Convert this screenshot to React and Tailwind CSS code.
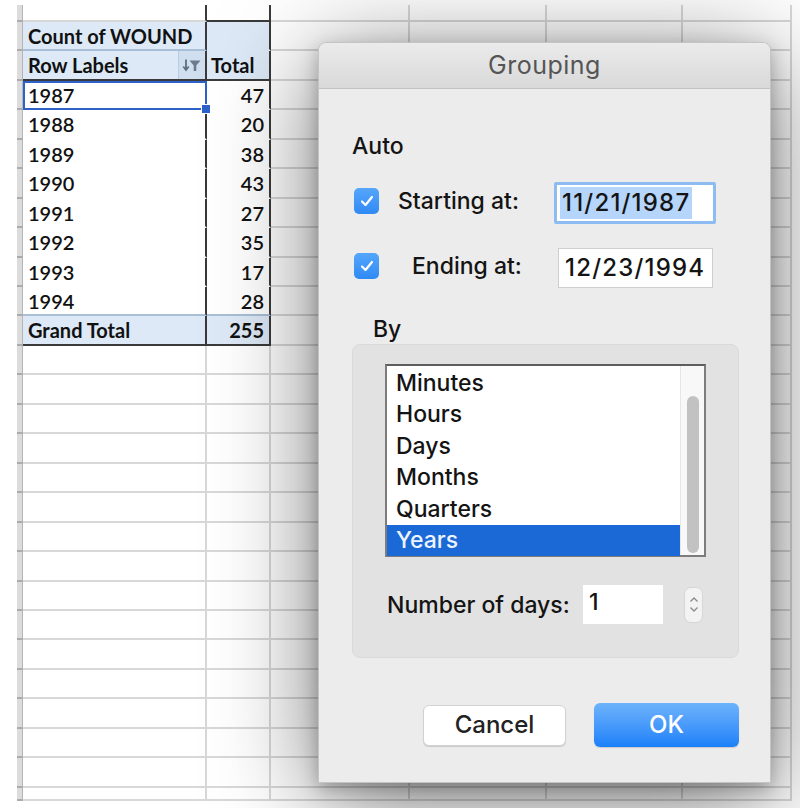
import React from "react";

const ROW_H = [
  "h-[17px]",
  "h-[29px]", "h-[30px]", "h-[29px]", "h-[30px]", "h-[29px]", "h-[30px]",
  "h-[29px]", "h-[30px]", "h-[29px]", "h-[29px]", "h-[30px]", "h-[29px]",
  "h-[30px]", "h-[29px]", "h-[30px]", "h-[29px]", "h-[30px]", "h-[29px]",
  "h-[30px]", "h-[29px]", "h-[29px]", "h-[30px]", "h-[29px]", "h-[30px]",
  "h-[29px]", "h-[30px]", "h-[13px]",
];

const COL_W = ["w-[184px]", "w-[64px]", "w-[139px]", "w-[137px]", "w-[136px]", "w-[109px]"];

const PIVOT = {
  1: { a: "Count of WOUND", b: "", type: "count" },
  2: { a: "Row Labels", b: "Total", type: "head" },
  3: { a: "1987", b: "47", type: "data" },
  4: { a: "1988", b: "20", type: "data" },
  5: { a: "1989", b: "38", type: "data" },
  6: { a: "1990", b: "43", type: "data" },
  7: { a: "1991", b: "27", type: "data" },
  8: { a: "1992", b: "35", type: "data" },
  9: { a: "1993", b: "17", type: "data" },
  10: { a: "1994", b: "28", type: "last" },
  11: { a: "Grand Total", b: "255", type: "grand" },
};

const GRID = "border-r-2 border-b-2 border-[#d8d8d8] bg-white";

function cellClass(r, c) {
  const p = PIVOT[r];
  if (r === 0 && c === 1) return "border-r-2 border-r-[#3a3a3a] border-b-2 border-b-[#3a3a3a] bg-white";
  if (r === 0 && c === 0) return "border-r-2 border-r-[#3a3a3a] border-b-2 border-b-[#d8d8d8] bg-white";
  if (!p || c > 1) return GRID;
  switch (p.type) {
    case "count":
      return c === 0
        ? "border-r-2 border-r-[#3a3a3a] border-b-2 border-b-[#a9bfd8] bg-[#dde9f6] font-bold"
        : "border-r-2 border-r-[#3a3a3a] border-b-2 border-b-[#dde9f6] bg-[#dde9f6] font-bold";
    case "head":
      return "border-r-2 border-r-[#3a3a3a] border-b-2 border-b-[#3a3a3a] bg-[#dde9f6] font-bold";
    case "data":
      return "border-r-2 border-r-[#3a3a3a] border-b-2 border-b-white bg-white font-semibold";
    case "last":
      return "border-r-2 border-r-[#3a3a3a] border-b-2 border-b-[#a9bfd8] bg-white font-semibold";
    case "grand":
      return "border-r-2 border-r-[#3a3a3a] border-b-2 border-b-[#3a3a3a] bg-[#dde9f6] font-bold";
    default:
      return GRID;
  }
}

function FilterButton() {
  return (
    <div className="ml-auto h-full w-[27px] border-l border-[#b8cde3] bg-[#cfdff0] flex items-center justify-center">
      <svg width="22" height="20" viewBox="0 0 22 20">
        <path d="M5 4.5v10" stroke="#5d6d7e" strokeWidth="1.8" />
        <path d="M2.3 11.5L5 15.2l2.7-3.7" fill="none" stroke="#5d6d7e" strokeWidth="1.6" />
        <path d="M8.5 5.5h11l-4.2 5V16h-2.6v-5.5z" fill="#6c7b8b" />
      </svg>
    </div>
  );
}

function SheetRow({ r }) {
  const p = PIVOT[r];
  return (
    <div className={`flex ${ROW_H[r]}`}>
      <div className="w-[6px] bg-[#dcdcdc] border-r border-r-[#b5b5b5] border-b-2 border-b-[#ababab]" />
      {COL_W.map((w, c) => {
        let content = null;
        if (p && c === 0) {
          content = (
            <div className="flex h-full items-center pl-[5px]">
              <span>{p.a}</span>
              {p.type === "head" && <FilterButton />}
            </div>
          );
        }
        if (p && c === 1 && p.b) {
          content = (
            <div
              className={`flex h-full items-center ${
                p.type === "head" ? "justify-start pl-[4px]" : "justify-end pr-[5px]"
              }`}
            >
              {p.b}
            </div>
          );
        }
        return (
          <div key={c} className={`${w} h-full ${cellClass(r, c)}`}>
            {content}
          </div>
        );
      })}
    </div>
  );
}

function Check() {
  return (
    <div className="w-[25px] h-[26px] rounded-[5px] bg-gradient-to-b from-[#55a6fb] to-[#2f8af4] flex items-center justify-center shrink-0">
      <svg width="20" height="20" viewBox="0 0 20 20">
        <path d="M5 10.5l3.5 3.5 6.5-8" fill="none" stroke="white" strokeWidth="2.2" strokeLinecap="round" strokeLinejoin="round" />
      </svg>
    </div>
  );
}

function Dialog() {
  const items = ["Minutes", "Hours", "Days", "Months", "Quarters", "Years"];
  return (
    <div className="absolute left-[318px] top-[42px] w-[453px] h-[741px] rounded-t-[8px] bg-[#ececec] border border-[#c4c4c4] shadow-[0_16px_100px_rgba(0,0,0,0.55),0_6px_18px_rgba(0,0,0,0.25)] flex flex-col font-['Inter','Liberation_Sans',sans-serif] font-medium text-[23px] text-[#141414]">
      <div className="h-[46px] rounded-t-[8px] bg-gradient-to-b from-[#ebebeb] to-[#d9d9d9] border-b border-[#c3c3c3] flex items-center justify-center text-[#555] text-[25px] font-normal tracking-[0.5px]">
        Grouping
      </div>
      <div className="flex flex-col pl-[33px] pr-[31px]">
        <div className="mt-[43px] h-[28px] leading-[28px]">Auto</div>

        <div className="mt-[22px] flex items-center h-[42px]">
          <div className="ml-[2px] -mt-[5px]"><Check /></div>
          <div className="ml-[19px] w-[156px] -mt-[4px] leading-[28px]">Starting at:</div>
          <div className="w-[162px] h-[42px] bg-white border-[3px] border-[#8dbcf3] rounded-[2px] flex items-center pl-[3px]">
            <span className="bg-[#b5d5fb] px-[2px] leading-[32px] tracking-[1.2px] text-[24px]">11/21/1987</span>
          </div>
        </div>

        <div className="mt-[24px] flex items-center h-[40px]">
          <div className="ml-[2px] -mt-[5px]"><Check /></div>
          <div className="ml-[33px] w-[146px] -mt-[4px] leading-[28px]">Ending at:</div>
          <div className="w-[155px] h-[40px] bg-white border border-[#cfcfcf] flex items-center pl-[6px]">
            <span className="tracking-[1.2px] text-[24px]">12/23/1994</span>
          </div>
        </div>

        <div className="mt-[27px] ml-[21px] h-[28px] leading-[28px]">By</div>

        <div className="mt-[1px] w-[387px] h-[314px] rounded-[8px] bg-[#e2e2e2] border border-[#dadada] flex flex-col pl-[32px] pt-[19px]">
          <div className="w-[321px] h-[193px] bg-white border-2 border-[#7c7c7c] border-t-[#5e5e5e] flex">
            <div className="flex-1 flex flex-col pt-[1px]">
              {items.map((it) => (
                <div
                  key={it}
                  className={`h-[31.5px] flex items-center pl-[9px] ${
                    it === "Years" ? "bg-[#1b69d6] text-[#eef4ff]" : ""
                  }`}
                >
                  {it}
                </div>
              ))}
            </div>
            <div className="w-[24px] bg-[#f8f8f8] border-l border-[#e6e6e6] flex flex-col items-center pt-[30px] pb-[2px]">
              <div className="w-[12px] flex-1 rounded-full bg-[#c2c2c2]" />
            </div>
          </div>

          <div className="mt-[28px] flex items-center h-[39px]">
            <div className="ml-[2px] w-[196px] leading-[28px]">Number of days:</div>
            <div className="w-[80px] h-[39px] bg-white flex items-start pl-[6px] pt-[3px] leading-[28px]">1</div>
            <div className="ml-[21px] w-[19px] h-[36px] rounded-[7px] bg-[#f3f3f3] border border-[#d6d6d6] flex flex-col items-center justify-center gap-[3px]">
              <svg width="10" height="7" viewBox="0 0 10 7">
                <path d="M1.5 5.5L5 2l3.5 3.5" fill="none" stroke="#8c8c8c" strokeWidth="1.4" />
              </svg>
              <svg width="10" height="7" viewBox="0 0 10 7">
                <path d="M1.5 1.5L5 5l3.5-3.5" fill="none" stroke="#8c8c8c" strokeWidth="1.4" />
              </svg>
            </div>
          </div>
        </div>

        <div className="mt-[45px] flex items-center justify-end gap-[28px]">
          <div className="w-[143px] h-[41px] bg-white rounded-[6px] border border-[#d2d2d2] shadow-[0_1px_1px_rgba(0,0,0,0.15)] flex items-center justify-center text-[24px] text-[#222]">
            Cancel
          </div>
          <div className="w-[145px] h-[44px] rounded-[6px] bg-gradient-to-b from-[#6db3fb] to-[#1a80f9] shadow-[0_1px_1px_rgba(0,0,0,0.15)] flex items-center justify-center text-[24px] text-white">
            OK
          </div>
        </div>
      </div>
    </div>
  );
}

export default function App() {
  const rows = Array.from({ length: ROW_H.length }, (_, i) => i);
  return (
    <div className="relative w-[800px] h-[808px] bg-white overflow-hidden">
      <div className="pt-[5px] pl-[17px] font-['Lato','Liberation_Sans',sans-serif] text-[20px] text-[#111]">
        <div className="relative w-[775px] flex flex-col">
          {rows.map((r) => (
            <SheetRow key={r} r={r} />
          ))}
          <div className="absolute left-[6px] top-[76px] w-[184px] h-[29px] border-2 border-[#2d63c8] pointer-events-none" />
          <div className="absolute left-[184px] top-[99px] w-[10px] h-[10px] bg-[#2d63c8] border border-white" />
        </div>
      </div>
      <Dialog />
    </div>
  );
}
